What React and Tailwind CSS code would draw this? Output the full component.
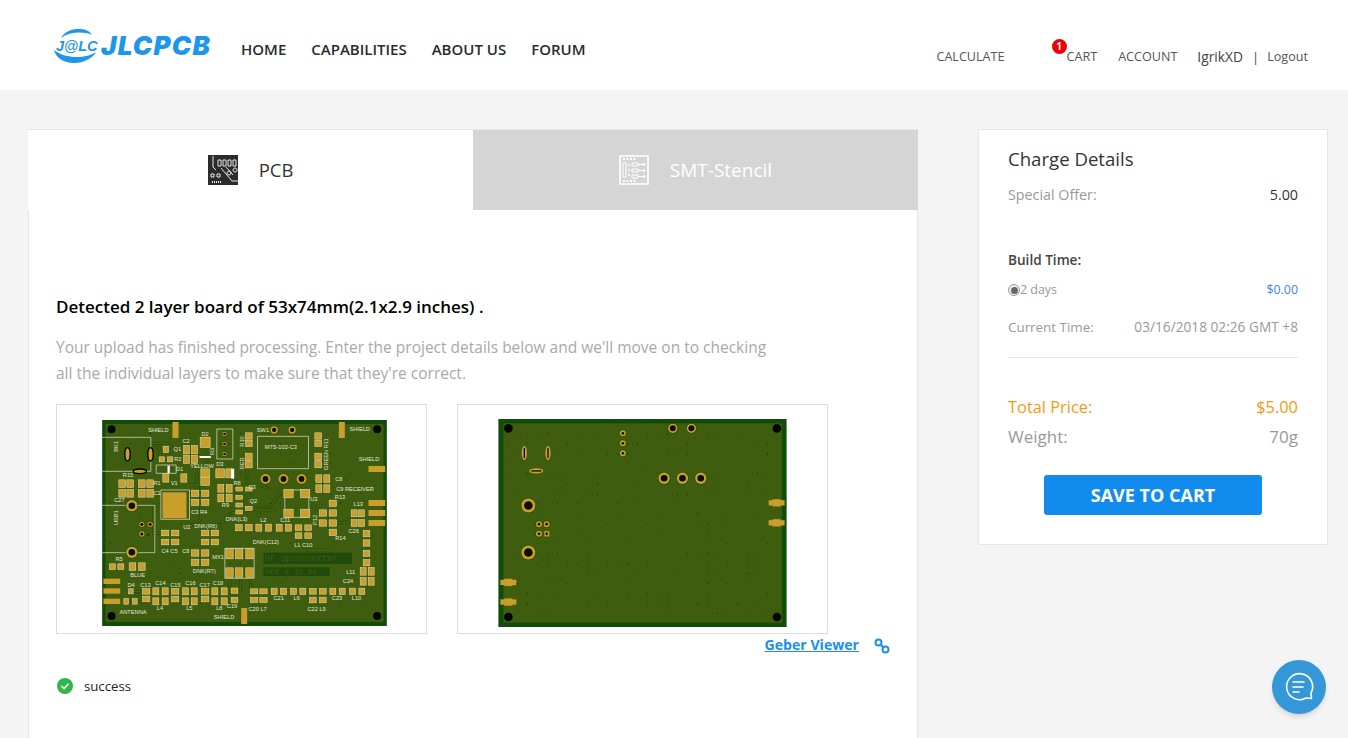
import React from "react";

const GOLD = "#c99f2b";
const SILK = "#e4e8dc";

// [x, y, w, h] in board coords, center based
const topPads = [
  [256, 60, 18, 48], [755, 60, 18, 48], [462, 618, 18, 48], [860, 177, 50, 18],
  [860, 279, 50, 18], [860, 309, 50, 18], [860, 339, 50, 18],
  [65, 514, 50, 16], [65, 543, 50, 16], [65, 574, 50, 16],
  [253, 286, 72, 78],
  [345, 97, 26, 28], [345, 189, 22, 22], [345, 214, 22, 22],
  [390, 190, 22, 24], [416, 190, 14, 24],
  [476, 78, 16, 16], [476, 100, 16, 16], [476, 140, 16, 18], [476, 163, 16, 18],
  [684, 78, 16, 16], [684, 100, 16, 16], [684, 140, 16, 18], [684, 163, 16, 18],
  [686, 206, 14, 20], [710, 206, 14, 20], [686, 236, 14, 20], [710, 236, 14, 20],
  [96, 221, 16, 20], [120, 221, 16, 20], [96, 250, 16, 20], [120, 250, 16, 20],
  [155, 221, 16, 20], [180, 221, 16, 20], [155, 250, 16, 20], [180, 250, 16, 20],
  [289, 119, 14, 22], [313, 119, 14, 22], [289, 148, 14, 22], [313, 148, 14, 22],
  [227, 118, 12, 16], [215, 148, 12, 12], [240, 148, 12, 12],
  [227, 204, 14, 22], [281, 204, 14, 22],
  [315, 250, 18, 16], [345, 250, 18, 16], [315, 277, 18, 16], [345, 277, 18, 16],
  [392, 235, 14, 20], [417, 235, 14, 20], [392, 264, 14, 20], [417, 264, 14, 20],
  [447, 237, 16, 9], [447, 262, 16, 9], [447, 285, 16, 9], [447, 306, 16, 9],
  [476, 237, 16, 9], [476, 295, 16, 9],
  [595, 251, 24, 22], [645, 251, 24, 22], [595, 310, 24, 22], [645, 310, 24, 22],
  [728, 280, 18, 16], [728, 309, 18, 16], [728, 339, 18, 16], [728, 367, 18, 16],
  [698, 309, 18, 16], [698, 339, 18, 16],
  [792, 310, 14, 18], [814, 310, 14, 18], [792, 339, 14, 18], [814, 339, 14, 18],
  [829, 371, 16, 16], [829, 399, 16, 16], [829, 430, 16, 16], [829, 458, 16, 16],
  [819, 484, 14, 20], [843, 484, 14, 20], [819, 514, 14, 20], [843, 514, 14, 20],
  [446, 353, 16, 16], [476, 353, 16, 16], [506, 353, 14, 18], [535, 353, 14, 18],
  [567, 353, 14, 18], [595, 353, 14, 18], [625, 353, 16, 14], [654, 353, 16, 14],
  [625, 377, 16, 14], [654, 377, 16, 14],
  [345, 369, 18, 14], [374, 369, 18, 14], [345, 396, 18, 14], [374, 396, 18, 14],
  [225, 369, 18, 14], [255, 369, 18, 14], [225, 396, 18, 14], [255, 396, 18, 14],
  [315, 429, 18, 16], [345, 429, 18, 16], [315, 457, 18, 16], [345, 457, 18, 16],
  [418, 431, 18, 28], [447, 431, 18, 28], [478, 431, 18, 28],
  [418, 488, 18, 26], [447, 488, 18, 26], [478, 488, 18, 26],
  [67, 470, 14, 14], [92, 470, 14, 14], [127, 470, 16, 20], [155, 470, 16, 20],
  [122, 544, 10, 12], [108, 574, 10, 14], [134, 574, 10, 14],
  [168, 544, 18, 14], [168, 567, 18, 14], [197, 544, 14, 18], [225, 544, 14, 18],
  [197, 574, 14, 18], [225, 574, 14, 18], [255, 544, 18, 14], [255, 567, 18, 14],
  [286, 544, 14, 18], [312, 544, 14, 18], [286, 574, 14, 18], [312, 574, 14, 18],
  [345, 544, 18, 14], [345, 567, 18, 14], [374, 544, 14, 18], [402, 544, 14, 18],
  [374, 574, 14, 18], [402, 574, 14, 18], [433, 542, 16, 13], [433, 570, 16, 13],
  [492, 544, 18, 12], [520, 544, 18, 12], [492, 570, 18, 12], [520, 570, 18, 12],
  [552, 544, 14, 16], [580, 544, 14, 16], [610, 544, 14, 16], [638, 544, 14, 16],
  [668, 544, 16, 14], [698, 544, 16, 14], [668, 570, 16, 14], [698, 570, 16, 14],
  [728, 544, 14, 16], [756, 544, 14, 16], [787, 544, 14, 16], [815, 544, 14, 16],
];

const topHoles = [
  [552, 60, 11], [606, 60, 11], [526, 207, 15], [580, 207, 15], [634, 207, 15],
  [125, 287, 17], [125, 427, 17], [155, 343, 8], [180, 343, 8], [155, 372, 8],
  [403, 72, 7], [403, 102, 7], [403, 132, 7],
];

const topSilk = [
  [174, 65, "SHIELD"], [778, 64, "SHIELD"], [806, 154, "SHIELD"], [371, 626, "SHIELD"],
  [334, 78, "D2"], [277, 100, "C2"], [500, 65, "SW1"], [250, 122, "Q1"], [252, 152, "R2"],
  [257, 182, "D1"], [300, 174, "YELLOW"], [378, 168, "D3"], [98, 202, "R15"], [190, 225, "R1"],
  [190, 255, "C1"], [72, 276, "C27"], [242, 226, "V1"], [303, 313, "C3 R4"], [430, 225, "R8"],
  [475, 237, "C3"], [478, 279, "Q2"], [395, 292, "R9"], [406, 332, "DNK(L3)"], [510, 335, "L2"],
  [570, 335, "C11"], [488, 403, "DNK(C12)"], [612, 412, "L1 C10"], [312, 353, "DNK(R6)"],
  [214, 429, "C4 C5"], [276, 430, "C8"], [366, 446, "MX1"], [308, 490, "DNK(R7)"],
  [735, 212, "C8"], [738, 242, "C9 RECEIVER"], [734, 266, "R13"], [735, 390, "R14"],
  [775, 368, "C26"], [790, 289, "L13"], [768, 492, "L11"], [758, 518, "C24"],
  [76, 452, "R5"], [120, 500, "BLUE"], [112, 532, "D4"], [88, 612, "ANTENNA"],
  [150, 530, "C13"], [195, 526, "C14"], [240, 530, "C15"], [285, 526, "C16"], [328, 530, "C17"],
  [368, 526, "C18"], [200, 600, "L4"], [288, 600, "L5"], [378, 600, "L8"], [410, 593, "C19"],
  [475, 603, "C20 L7"], [550, 570, "C21"], [610, 570, "L6"], [652, 602, "C22 L9"],
  [725, 570, "C23"], [785, 570, "L10"], [660, 272, "U3"], [279, 357, "U2"], [524, 117, "M7S-102-C3"],
];

const topLines = [
  [22, 82, 182, 82], [182, 82, 182, 184], [182, 184, 36, 184],
  [36, 286, 194, 286], [194, 286, 194, 428], [194, 428, 36, 428],
  [380, 57, 428, 57], [428, 57, 428, 147], [428, 147, 380, 147], [380, 147, 380, 57],
  [502, 79, 655, 79], [655, 79, 655, 176], [655, 176, 502, 176], [502, 176, 502, 79],
  [584, 240, 656, 240], [656, 240, 656, 322], [656, 322, 584, 322], [584, 322, 584, 240],
  [212, 240, 298, 240], [298, 240, 298, 328], [298, 328, 212, 328], [212, 328, 212, 240],
  [404, 415, 492, 415], [492, 415, 492, 505], [404, 505, 492, 505], [404, 505, 404, 415],
  [198, 165, 258, 165], [258, 165, 258, 190], [258, 190, 198, 190], [198, 190, 198, 165],
];

const topTraces = [
  "M182 100 H230 L250 120",
  "M300 345 L390 345 L420 310 L540 290 L580 240",
  "M330 220 V330 L300 350",
  "M190 280 V370 H225",
  "M480 500 V530 L500 545",
  "M450 505 V545",
  "M420 505 V530 L400 545",
  "M830 400 V530 L815 545",
  "M700 310 L660 280",
  "M540 240 L510 225 L430 225",
  "M350 120 V180",
  "M470 180 V240",
  "M820 340 L800 330 L740 340",
  "M150 544 H120 M170 574 H130",
  "M600 360 L650 420 H720",
  "M320 190 V270 M300 225 H345",
  "M190 100 L210 120 V145",
  "M420 215 L440 245 M500 300 L560 300",
  "M660 210 H690 M650 250 L690 240",
];

const seeded = (count, seed) => {
  // small lcg, keeps the via pattern the same on every render
  let s = seed;
  const out = [];
  for (let i = 0; i < count; i++) {
    s = (s * 9301 + 49297) % 233280;
    const x = 60 + Math.floor((s / 233280) * 27) * 30;
    s = (s * 9301 + 49297) % 233280;
    const y = 70 + Math.floor((s / 233280) * 18.5) * 30;
    out.push([x, y]);
  }
  return out;
};

const BoardTop = () => (
  <svg viewBox="36 30 854 618" className="w-[285px] h-[206px] block">
    <rect x="36" y="30" width="854" height="618" fill="#114c0b" />
    <rect x="46" y="42" width="834" height="594" fill="#3f5d0e" />
    {topTraces.map((d, i) => (
      <g key={i} fill="none">
        <path d={d} stroke="#24470a" strokeWidth="8" />
        <path d={d} stroke="#47690f" strokeWidth="4" />
      </g>
    ))}
    {seeded(110, 7).map(([x, y], i) => (
      <circle key={i} cx={x} cy={y} r="1.4" fill="#0d1a04" />
    ))}
    {topLines.map(([a, b, c, d], i) => (
      <line key={i} x1={a} y1={b} x2={c} y2={d} stroke={SILK} strokeWidth="2" />
    ))}
    {topPads.map(([x, y, w, h], i) => {
      // the small smd pads get a silk outline around them, as on the board
      const small = w < 30 && h < 30;
      const pw = small ? w + 4 : w;
      const ph = small ? h + 3 : h;
      return (
        <rect key={i} x={x - pw / 2} y={y - ph / 2} width={pw} height={ph} fill={GOLD} stroke="#dfe5cc" strokeWidth={small ? 1.5 : 0} />
      );
    })}
    {topHoles.map(([x, y, r], i) => (
      <g key={i}>
        <circle cx={x} cy={y} r={r + 2} fill="#2c4a08" />
        <circle cx={x} cy={y} r={r} fill={GOLD} />
        <circle cx={x} cy={y} r={r * 0.58} fill="#0a0f02" />
      </g>
    ))}
    {[[64, 58], [861, 58], [64, 618], [861, 618]].map(([x, y], i) => (
      <circle key={i} cx={x} cy={y} r="12" fill="#050505" />
    ))}
    <rect x="172" y="372" width="4" height="4" fill="#000" />
    <rect x="328" y="138" width="34" height="6" fill="#fff" />
    <rect x="423" y="176" width="9" height="30" fill="#fff" />
    <rect x="232" y="167" width="7" height="22" fill="#fff" />
    <ellipse cx="112" cy="133" rx="8" ry="20" fill={GOLD} stroke="#000" strokeWidth="4" />
    <ellipse cx="181" cy="133" rx="8" ry="20" fill={GOLD} stroke="#000" strokeWidth="4" />
    <ellipse cx="149" cy="184" rx="20" ry="7" fill={GOLD} stroke="#000" strokeWidth="4" />
    <rect x="520" y="428" width="265" height="34" fill="#1f4a0c" />
    <rect x="520" y="472" width="198" height="26" fill="#1f4a0c" />
    <text x="524" y="453" fontFamily="Liberation Mono, monospace" fontSize="26" fill="#3f5d0e">HF Upconverter</text>
    <text x="524" y="493" fontFamily="Liberation Mono, monospace" fontSize="24" fill="#3f5d0e">VER 8.15.EE</text>
    {topSilk.map(([x, y, t], i) => (
      <text key={i} x={x} y={y} fontFamily="Liberation Sans, sans-serif" fontSize="17" fill={SILK}>{t}</text>
    ))}
    <text x="83" y="345" transform="rotate(-90 83 345)" fontFamily="Liberation Sans, sans-serif" fontSize="17" fill={SILK}>USB1</text>
    <text x="84" y="125" transform="rotate(-90 84 125)" fontFamily="Liberation Sans, sans-serif" fontSize="17" fill={SILK}>BK1</text>
    <text x="372" y="135" transform="rotate(-90 372 135)" fontFamily="Liberation Sans, sans-serif" fontSize="17" fill={SILK}>R3</text>
    <text x="462" y="110" transform="rotate(-90 462 110)" fontFamily="Liberation Sans, sans-serif" fontSize="17" fill={SILK}>R10</text>
    <text x="462" y="178" transform="rotate(-90 462 178)" fontFamily="Liberation Sans, sans-serif" fontSize="17" fill={SILK}>RED</text>
    <text x="712" y="180" transform="rotate(-90 712 180)" fontFamily="Liberation Sans, sans-serif" fontSize="17" fill={SILK}>GREEN R11</text>
    <text x="680" y="345" transform="rotate(-90 680 345)" fontFamily="Liberation Sans, sans-serif" fontSize="17" fill={SILK}>P12</text>
  </svg>
);

const bottomRings = [
  [548, 55, 14, 9], [604, 55, 14, 9], [398, 70, 9, 4], [398, 100, 9, 4], [398, 130, 9, 4],
  [522, 205, 17, 10], [577, 205, 17, 10], [632, 205, 17, 10],
  [114, 287, 21, 13], [114, 428, 21, 13], [146, 343, 9, 4], [169, 343, 9, 4], [146, 372, 9, 4],
];

const BoardBottom = () => (
  <svg viewBox="24 27 866 625" className="w-[289px] h-[208px] block">
    <rect x="24" y="27" width="866" height="625" fill="#114c0b" />
    <rect x="39" y="40" width="837" height="599" fill="#3f5d0e" />
    {seeded(230, 31).map(([x, y], i) => (
      <circle key={i} cx={x - 8} cy={y + 2} r="1.3" fill="#0d1a04" />
    ))}
    {[[54, 55], [861, 55], [54, 622], [861, 622]].map(([x, y], i) => (
      <circle key={i} cx={x} cy={y} r="13" fill="#050505" />
    ))}
    {bottomRings.map(([x, y, r, h], i) => (
      <g key={i}>
        <circle cx={x} cy={y} r={r + 2} fill="#2c4a08" />
        <circle cx={x} cy={y} r={r} fill={GOLD} />
        <circle cx={x} cy={y} r={h} fill="#0a0f02" />
      </g>
    ))}
    <rect x="162" y="364" width="15" height="16" fill={GOLD} />
    <rect x="166" y="368" width="6" height="8" fill="#0a0f02" />
    <ellipse cx="102" cy="129" rx="8" ry="21" fill={GOLD} />
    <rect x="100" y="114" width="4" height="30" fill="#0a0f02" />
    <ellipse cx="173" cy="129" rx="8" ry="21" fill={GOLD} />
    <rect x="171" y="114" width="4" height="30" fill="#0a0f02" />
    <ellipse cx="138" cy="183" rx="21" ry="8" fill={GOLD} />
    <rect x="123" y="181" width="30" height="4" fill="#0a0f02" />
    {[[860, 279], [860, 339], [54, 518], [54, 577]].map(([x, y], i) => (
      <g key={i} fill={GOLD}>
        <rect x={x - 24} y={y - 8} width="48" height="16" />
        <rect x={x - 12} y={y - 11} width="24" height="22" />
      </g>
    ))}
  </svg>
);

const PcbIcon = () => (
  <svg viewBox="0 0 30 30" className="w-[30px] h-[30px]">
    <rect width="30" height="30" fill="#2b2b2b" />
    <g fill="none" stroke="#e8e8e8" strokeWidth="1">
      <path d="M5 1 V12 L8 15 M10 5 h3 v6 h-3z M15 5 h3 v6 h-3z M20 5 h3 v6 h-3z M25 5 h3 v6 h-3z" />
      <path d="M3 19 h3 v3 h-3z M9 19 h3 v3 h-3z M13 13 L24 26 H30 M18 12 L25 20 M21 16 a2 2 0 1 0 .1 0 M27 13 a2 2 0 1 0 .1 0" />
      <path d="M4 27 h9" strokeDasharray="1 1" strokeWidth="2" />
    </g>
  </svg>
);

const StencilIcon = () => (
  <svg viewBox="0 0 30 30" className="w-[30px] h-[30px]">
    <g fill="none" stroke="#fff">
      <rect x="1" y="1" width="28" height="28" strokeWidth="1.6" />
      <rect x="4" y="8" width="3" height="14" strokeWidth="1" />
      <path d="M4 4 h14 M4 26 h14" strokeWidth="2" strokeDasharray="2 1.5" />
      <path d="M13 8 h6 v3 h-6z M13 14 h6 v3 h-6z M13 20 h6 v3 h-6z M19 9.5 h5 M19 15.5 h5 M19 21.5 h5" strokeWidth="1" />
    </g>
    <g fill="#fff">
      <circle cx="10" cy="10" r="1" /><circle cx="10" cy="15" r="1" /><circle cx="10" cy="20" r="1" />
      <circle cx="25" cy="9.5" r="1.3" /><circle cx="25" cy="15.5" r="1.3" /><circle cx="25" cy="21.5" r="1.3" />
    </g>
  </svg>
);

const Logo = () => (
  <div className="flex items-center">
    <div className="relative w-[46px] h-[34px]">
      <svg viewBox="0 0 46 34" className="absolute inset-0 w-full h-full">
        <path d="M8 9 C14 -2 34 -3 39 6 C30 2 16 3 8 9z" fill="#1e96ee" />
        <path d="M1 21 C5 38 34 38 43 23 C34 29 14 31 1 21z" fill="#1e96ee" />
      </svg>
      <span className="absolute left-[3px] top-[8px] text-[14.5px] leading-[18px] font-bold italic text-[#1e96ee] font-['Liberation_Sans',sans-serif] whitespace-nowrap">J@LC</span>
    </div>
    <span className="ml-[2px] text-[26px] leading-[30px] font-black italic text-[#1e96ee] font-['Inter',sans-serif] tracking-[1.2px]">JLCPCB</span>
  </div>
);

const App = () => {
  return (
    <div className="h-screen overflow-hidden bg-[#f4f4f4] relative font-['Open_Sans',sans-serif]">
      <header className="h-[90px] bg-white flex items-start">
        <div className="ml-[53px] mt-[29px]">
          <Logo />
        </div>
        <nav className="ml-[30px] mt-[38px] flex gap-[25px] text-[15px] leading-[22px] font-semibold text-[#2b2b2b]">
          <span>HOME</span>
          <span>CAPABILITIES</span>
          <span>ABOUT US</span>
          <span>FORUM</span>
        </nav>
        <div className="ml-auto mr-[40px] mt-[48px] flex items-center text-[12.6px] leading-[18px] text-[#555]">
          <span>CALCULATE</span>
          <span className="relative ml-[62px]">
            CART
            <span className="absolute left-[-15px] top-[-9px] w-[15px] h-[15px] rounded-full bg-[#f00000] text-white text-[10px] leading-[15px] font-bold text-center">1</span>
          </span>
          <span className="ml-[21px]">ACCOUNT</span>
          <span className="ml-[20px] text-[13.8px] text-[#444]">IgrikXD</span>
          <span className="ml-[9px] text-[13px] text-[#444]">|</span>
          <span className="ml-[8px]">Logout</span>
        </div>
      </header>

      <main className="mt-[39px] ml-[28px] mr-[20px] flex items-start">
        <section className="w-[890px] h-[641px] bg-white border border-[#e6e6e6]">
          <div className="flex h-[80px] -mx-px">
            <div className="w-1/2 bg-white flex items-center justify-center gap-[21px] text-[18.5px] text-[#333]">
              <PcbIcon />
              <span>PCB</span>
            </div>
            <div className="w-1/2 bg-[#d5d5d5] flex items-center justify-center gap-[21px] text-[19px] text-white">
              <StencilIcon />
              <span>SMT-Stencil</span>
            </div>
          </div>
          <div className="pl-[27px] pr-[27px]">
            <h2 className="mt-[86px] text-[17px] leading-[22px] font-semibold text-black">
              Detected 2 layer board of 53x74mm(2.1x2.9 inches) .
            </h2>
            <p className="mt-[16px] w-[730px] text-[15.5px] leading-[26px] text-[#a9a9a9]">
              Your upload has finished processing. Enter the project details below and we'll move on to checking all the individual layers to make sure that they're correct.
            </p>
            <div className="mt-[18px] flex gap-[30px]">
              <div className="w-[371px] h-[230px] border border-[#ddd] flex items-center justify-center pt-[8px] pl-[6px]">
                <BoardTop />
              </div>
              <div className="w-[371px] h-[230px] border border-[#ddd] flex items-center justify-center pt-[8px]">
                <BoardBottom />
              </div>
            </div>
            <div className="flex items-center justify-end">
              <a className="text-[14.1px] leading-[22px] font-bold text-[#1b8ff0] underline">Geber Viewer</a>
              <svg viewBox="0 0 16 16" className="ml-[15px] mt-[2px] w-[16px] h-[16px]" fill="none" stroke="#1b8ff0" strokeWidth="2">
                <circle cx="4.5" cy="4.5" r="3" />
                <circle cx="11.5" cy="11.5" r="3" />
                <path d="M6.5 6.5 L9.5 9.5" />
              </svg>
            </div>
            <div className="mt-[20px] flex items-center gap-[11px] pl-[1px] text-[13.2px] leading-[20px] text-[#222]">
              <svg viewBox="0 0 16 16" className="w-[16px] h-[16px]">
                <circle cx="8" cy="8" r="8" fill="#2db84d" />
                <path d="M4.5 8.2 L7 10.6 L11.5 5.8" fill="none" stroke="#fff" strokeWidth="1.6" />
              </svg>
              <span>success</span>
            </div>
          </div>
        </section>

        <aside className="ml-[60px] w-[350px] h-[416px] bg-white border border-[#e6e6e6] px-[29px] text-[#999]">
          <h3 className="mt-[16px] text-[18.6px] leading-[26px] text-[#333]">Charge Details</h3>
          <div className="mt-[13px] flex justify-between text-[14.3px] leading-[20px]">
            <span>Special Offer:</span>
            <span className="text-[#333]">5.00</span>
          </div>
          <div className="mt-[45px] text-[13.6px] leading-[20px] font-semibold text-[#444]">Build Time:</div>
          <div className="mt-[10px] flex items-center justify-between text-[12.4px] leading-[20px]">
            <span className="flex items-center">
              <span className="w-[12px] h-[12px] rounded-full border border-[#999] bg-[#eee] flex items-center justify-center">
                <span className="w-[7px] h-[7px] rounded-full bg-[#666]" />
              </span>
              2 days
            </span>
            <span className="text-[#3b82f6]">$0.00</span>
          </div>
          <div className="mt-[17px] flex justify-between text-[13.4px] leading-[20px]">
            <span>Current Time:</span>
            <span className="text-[13.7px]">03/16/2018 02:26 GMT +8</span>
          </div>
          <div className="mt-[20px] border-t border-[#e5e5e5]" />
          <div className="mt-[38px] flex justify-between text-[16.4px] leading-[22px] text-[#f79a0e]">
            <span>Total Price:</span>
            <span>$5.00</span>
          </div>
          <div className="mt-[8px] flex justify-between text-[17px] leading-[22px] text-[#999]">
            <span>Weight:</span>
            <span>70g</span>
          </div>
          <button className="mt-[27px] mx-auto block w-[218px] h-[40px] rounded-[3px] bg-[#128cec] text-white text-[18px] font-bold">
            SAVE TO CART
          </button>
        </aside>
      </main>

      <div className="absolute left-[1272px] top-[660px] w-[54px] h-[54px] rounded-full bg-[#3498d8] shadow-md flex items-center justify-center">
        <svg viewBox="0 0 30 30" className="w-[30px] h-[30px]" fill="none" stroke="#fff" strokeWidth="1.6">
          <path d="M27.5 26.5 L22 26 A13 13 0 1 1 27 21z" strokeLinejoin="round" />
          <path d="M9 10 H20 M9 15 H19 M9 20 H15" strokeLinecap="round" />
        </svg>
      </div>
    </div>
  );
};

export default App;
